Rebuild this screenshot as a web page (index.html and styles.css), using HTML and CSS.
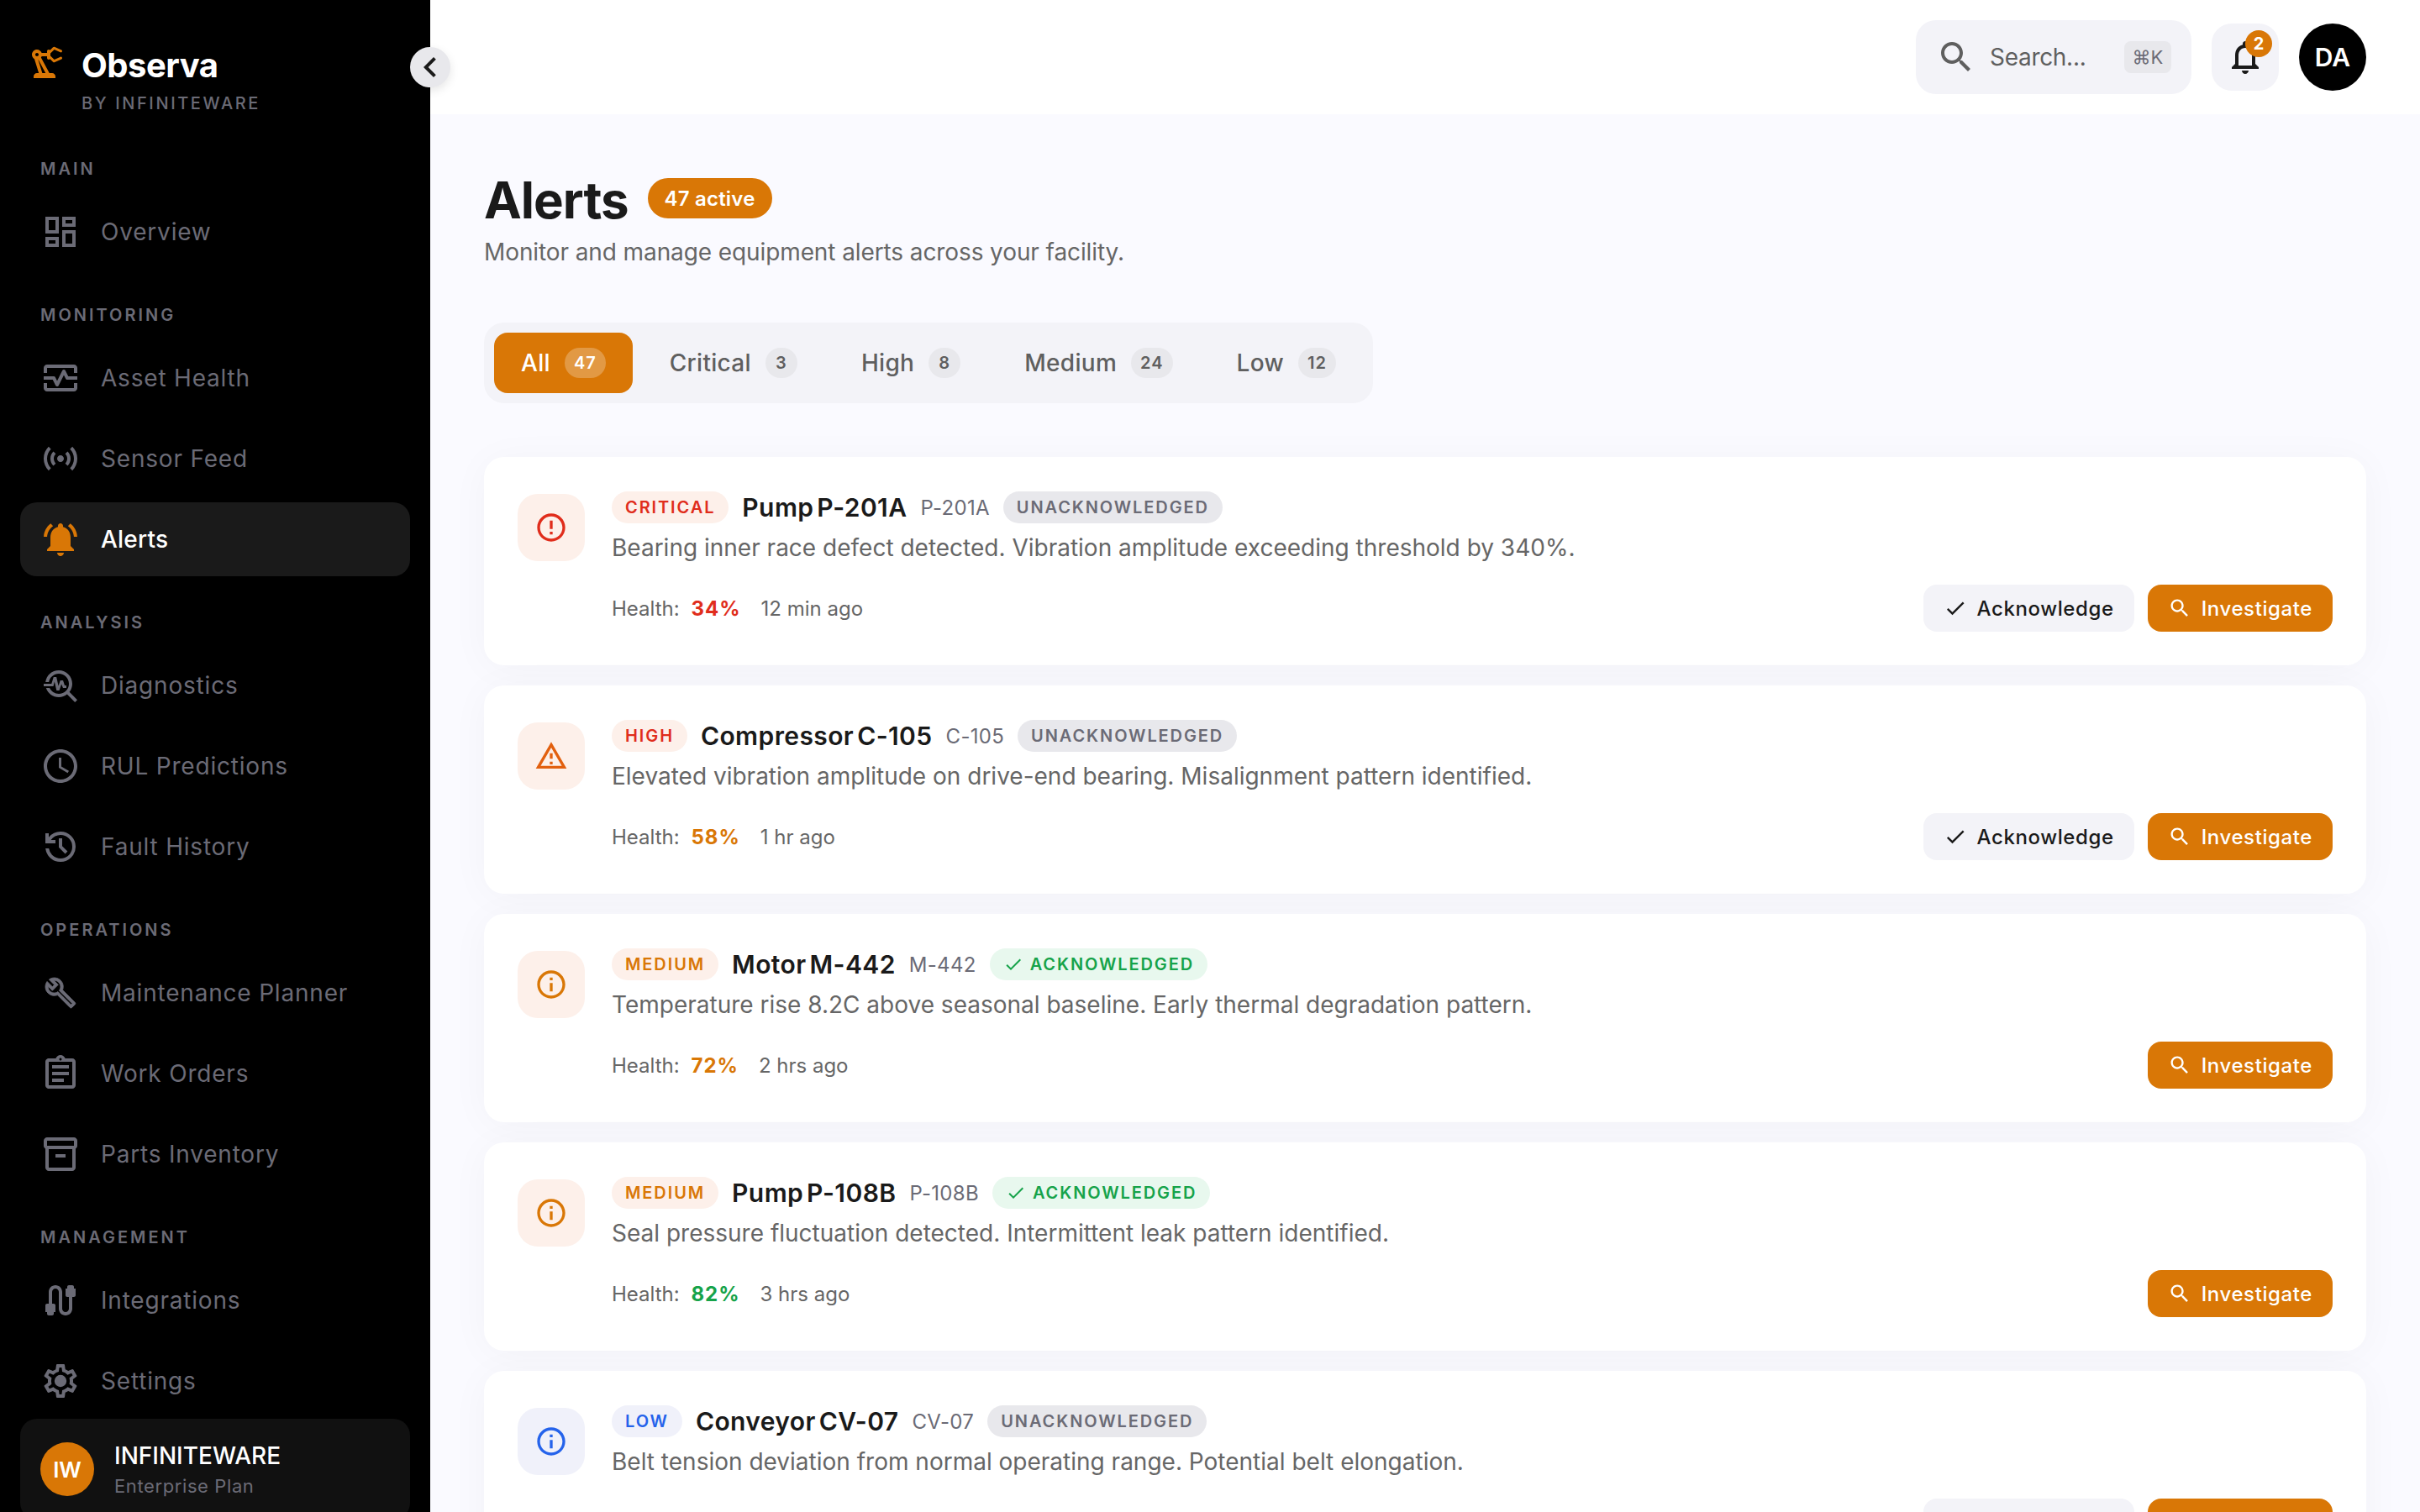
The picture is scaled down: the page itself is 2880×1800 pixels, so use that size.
FILE: index.html
```html
<!DOCTYPE html>
<html lang="en">
<head>
    <meta charset="UTF-8">
    <meta name="viewport" content="width=device-width, initial-scale=1.0">
    <title>Observa - Alerts</title>
    <link rel="stylesheet" href="styles.css">
</head>
<body>
    <div class="app">
        <aside class="sidebar">
            <div class="brand">
                <svg class="brand-icon" viewBox="0 0 24 24"><path d="M19.93 8.35l-3.6 1.68L14 7.7V6.3l2.33-2.33 3.6 1.68c.38.18.82.01 1-.36.18-.38.01-.82-.36-1l-3.92-1.83c-.38-.18-.83-.1-1.13.2L13.78 4.4c-.18-.24-.46-.4-.78-.4-.55 0-1 .45-1 1v1H8.82C8.4 4.84 7.3 4 6 4 4.34 4 3 5.34 3 7c0 1.1.6 2.05 1.48 2.57L7.08 18H6c-1.1 0-2 .9-2 2v1h13v-1c0-1.1-.9-2-2-2h-1.62L8.41 8.77c.17-.24.31-.49.41-.77H12v1c0 .55.45 1 1 1 .32 0 .6-.16.78-.4l1.74 1.74c.3.3.75.38 1.13.2l3.92-1.83c.38-.18.54-.62.36-1-.18-.37-.62-.54-1-.36zM6 8c-.55 0-1-.45-1-1s.45-1 1-1 1 .45 1 1-.45 1-1 1zm5.11 10H9.17l-2.46-8h.1l4.3 8z"/></svg>
                <div class="brand-text">
                    <div class="brand-name">Observa</div>
                    <div class="brand-sub">BY INFINITEWARE</div>
                </div>
            </div>
            <button class="collapse-btn">
                <svg viewBox="0 0 24 24"><path d="M15.41 7.41L14 6l-6 6 6 6 1.41-1.41L10.83 12z"/></svg>
            </button>

            <nav class="nav">
                <div class="nav-label">MAIN</div>
                <a class="nav-item">
                    <svg viewBox="0 0 24 24"><path d="M19 5v2h-4V5h4M9 5v6H5V5h4m10 8v6h-4v-6h4M9 17v2H5v-2h4M21 3h-8v6h8V3zM11 3H3v10h8V3zm10 8h-8v10h8V11zm-10 4H3v6h8v-6z"/></svg>
                    Overview
                </a>

                <div class="nav-label">MONITORING</div>
                <a class="nav-item">
                    <svg viewBox="0 0 24 24"><path d="M20 4H4c-1.1 0-2 .9-2 2v3h2V6h16v3h2V6c0-1.1-.9-2-2-2zm0 14H4v-3H2v3c0 1.1.9 2 2 2h16c1.1 0 2-.9 2-2v-3h-2v3z"/><path d="M14.89 7.55c-.34-.68-1.45-.68-1.79 0L10 13.76l-1.11-2.21A.988.988 0 0 0 8 11H2v2h5.38l1.72 3.45c.18.34.52.55.9.55s.72-.21.89-.55L14 10.24l1.11 2.21c.17.34.51.55.89.55h6v-2h-5.38l-1.73-3.45z"/></svg>
                    Asset Health
                </a>
                <a class="nav-item">
                    <svg viewBox="0 0 24 24"><path d="M7.76 16.24C6.67 15.16 6 13.66 6 12s.67-3.16 1.76-4.24l1.42 1.42C8.45 9.9 8 10.9 8 12c0 1.1.45 2.1 1.17 2.83l-1.41 1.41zm8.48 0C17.33 15.16 18 13.66 18 12s-.67-3.16-1.76-4.24l-1.42 1.42C15.55 9.9 16 10.9 16 12c0 1.1-.45 2.1-1.17 2.83l1.41 1.41zM12 10c-1.1 0-2 .9-2 2s.9 2 2 2 2-.9 2-2-.9-2-2-2zm8 2c0 2.21-.9 4.21-2.35 5.65l1.42 1.42C20.88 17.26 22 14.76 22 12s-1.12-5.26-2.93-7.07l-1.42 1.42C19.1 7.79 20 9.79 20 12zM6.35 6.35 4.93 4.93C3.12 6.74 2 9.24 2 12s1.12 5.26 2.93 7.07l1.42-1.42C4.9 16.21 4 14.21 4 12s.9-4.21 2.35-5.65z"/></svg>
                    Sensor Feed
                </a>
                <a class="nav-item active">
                    <svg viewBox="0 0 24 24"><path d="M7.58 4.08 6.15 2.65C3.75 4.48 2.17 7.3 2.03 10.5h2c.15-2.65 1.51-4.97 3.55-6.42zm12.39 6.42h2c-.15-3.2-1.73-6.02-4.12-7.85l-1.42 1.43c2.02 1.45 3.39 3.77 3.54 6.42zM18 11c0-3.07-1.64-5.64-4.5-6.32V4c0-.83-.67-1.5-1.5-1.5s-1.5.67-1.5 1.5v.68C7.63 5.36 6 7.92 6 11v5l-2 2v1h16v-1l-2-2v-5zm-6 11c.14 0 .27-.01.4-.04.65-.14 1.18-.58 1.44-1.18.1-.24.15-.5.15-.78h-4c.01 1.1.9 2 2.01 2z"/></svg>
                    Alerts
                </a>

                <div class="nav-label">ANALYSIS</div>
                <a class="nav-item">
                    <svg viewBox="0 0 24 24"><path d="M22 20.59l-4.69-4.69C18.37 14.55 19 12.85 19 11c0-4.42-3.58-8-8-8-4.08 0-7.44 3.05-7.93 7h2.02C5.57 7.17 8.03 5 11 5c3.31 0 6 2.69 6 6s-2.69 6-6 6c-2.42 0-4.5-1.44-5.45-3.5H3.4C4.45 16.69 7.46 19 11 19c1.85 0 3.55-.63 4.9-1.69L20.59 22 22 20.59z"/><path d="M8.43 9.69 9.65 15h1.64l1.26-3.78.95 2.28h2v-1.5h-1L13.51 9h-1.64l-1.09 3.29L9.58 7H7.89l-1.25 4H2v1.5h5.75z"/></svg>
                    Diagnostics
                </a>
                <a class="nav-item">
                    <svg viewBox="0 0 24 24"><path d="M11.99 2C6.47 2 2 6.48 2 12s4.47 10 9.99 10C17.52 22 22 17.52 22 12S17.52 2 11.99 2zM12 20c-4.42 0-8-3.58-8-8s3.58-8 8-8 8 3.58 8 8-3.58 8-8 8zm.5-13H11v6l5.25 3.15.75-1.23-4.5-2.67z"/></svg>
                    RUL Predictions
                </a>
                <a class="nav-item">
                    <svg viewBox="0 0 24 24"><path d="M12 21q-3.45 0-6.012-2.288T3.05 13H5.1q.35 2.6 2.313 4.3T12 19q2.925 0 4.963-2.037T19 12q0-2.925-2.037-4.963T12 5q-1.725 0-3.225.8T6.25 8H9v2H3V4h2v2.35q1.275-1.6 3.113-2.475T12 3q3.75 0 6.375 2.625T21 12q0 3.75-2.625 6.375T12 21Zm2.8-4.8L11 12.4V7h2v4.6l3.2 3.2-1.4 1.4Z"/></svg>
                    Fault History
                </a>

                <div class="nav-label">OPERATIONS</div>
                <a class="nav-item">
                    <svg class="thick" viewBox="-2.67 -2.67 29.33 29.33"><path d="M22.61 18.99l-9.08-9.08c.93-2.34.45-5.1-1.44-7C9.79.61 6.21.4 3.66 2.26L7.5 6.11 6.08 7.52 2.25 3.69C.39 6.23.6 9.82 2.9 12.11c1.86 1.86 4.57 2.35 6.89 1.48l9.11 9.11c.39.39 1.02.39 1.41 0l2.3-2.3c.4-.38.4-1.01 0-1.41zm-3 1.6l-9.46-9.46c-.61.45-1.29.72-2 .82-1.36.2-2.79-.21-3.83-1.25C3.37 9.76 2.93 8.5 3 7.26l3.09 3.09 4.24-4.24-3.09-3.09c1.24-.07 2.49.37 3.44 1.31 1.08 1.08 1.49 2.57 1.24 3.96-.12.71-.42 1.37-.88 1.96l9.45 9.45-.88.88z"/></svg>
                    Maintenance Planner
                </a>
                <a class="nav-item">
                    <svg viewBox="0 0 24 24"><path d="M19 3h-4.18C14.4 1.84 13.3 1 12 1s-2.4.84-2.82 2H5c-.14 0-.27.01-.4.04-.39.08-.74.28-1.01.55-.18.18-.33.4-.43.64-.1.23-.16.49-.16.77v14c0 .27.06.54.16.78s.25.45.43.64c.27.27.62.47 1.01.55.13.02.26.03.4.03h14c1.1 0 2-.9 2-2V5c0-1.1-.9-2-2-2zm-7-.25c.41 0 .75.34.75.75s-.34.75-.75.75-.75-.34-.75-.75.34-.75.75-.75zM19 19H5V5h14v14z"/><path d="M7 15h7v2H7zm0-4h10v2H7zm0-4h10v2H7z"/></svg>
                    Work Orders
                </a>
                <a class="nav-item">
                    <svg viewBox="0 0 24 24"><path d="M20 2H4c-1 0-2 .9-2 2v3.01c0 .72.43 1.34 1 1.69V20c0 1.1 1.1 2 2 2h14c.9 0 2-.9 2-2V8.7c.57-.35 1-.97 1-1.69V4c0-1.1-1-2-2-2zm-1 18H5V9h14v11zm1-13H4V4h16v3z"/><path d="M9 12h6v2H9z"/></svg>
                    Parts Inventory
                </a>

                <div class="nav-label">MANAGEMENT</div>
                <a class="nav-item">
                    <svg viewBox="0 0 24 24"><path d="M20 5V4c0-.55-.45-1-1-1h-2c-.55 0-1 .45-1 1v1h-1v4c0 .55.45 1 1 1h1v7c0 1.1-.9 2-2 2s-2-.9-2-2V7c0-2.21-1.79-4-4-4S5 4.79 5 7v7H4c-.55 0-1 .45-1 1v4h1v1c0 .55.45 1 1 1h2c.55 0 1-.45 1-1v-1h1v-4c0-.55-.45-1-1-1H7V7c0-1.1.9-2 2-2s2 .9 2 2v10c0 2.21 1.79 4 4 4s4-1.79 4-4v-7h1c.55 0 1-.45 1-1V5h-1z"/></svg>
                    Integrations
                </a>
                <a class="nav-item">
                    <svg viewBox="0 0 24 24"><path d="M19.43 12.98c.04-.32.07-.64.07-.98 0-.34-.03-.66-.07-.98l2.11-1.65c.19-.15.24-.42.12-.64l-2-3.46c-.09-.16-.26-.25-.44-.25-.06 0-.12.01-.17.03l-2.49 1c-.52-.4-1.08-.73-1.69-.98l-.38-2.65C14.46 2.18 14.25 2 14 2h-4c-.25 0-.46.18-.49.42l-.38 2.65c-.61.25-1.17.59-1.69.98l-2.49-1c-.06-.02-.12-.03-.18-.03-.17 0-.34.09-.43.25l-2 3.46c-.13.22-.07.49.12.64l2.11 1.65c-.04.32-.07.65-.07.98 0 .33.03.66.07.98l-2.11 1.65c-.19.15-.24.42-.12.64l2 3.46c.09.16.26.25.44.25.06 0 .12-.01.17-.03l2.49-1c.52.4 1.08.73 1.69.98l.38 2.65c.03.24.24.42.49.42h4c.25 0 .46-.18.49-.42l.38-2.65c.61-.25 1.17-.59 1.69-.98l2.49 1c.06.02.12.03.18.03.17 0 .34-.09.43-.25l2-3.46c.12-.22.07-.49-.12-.64l-2.11-1.65zm-1.98-1.71c.04.31.05.52.05.73 0 .21-.02.43-.05.73l-.14 1.13.89.7 1.08.84-.7 1.21-1.27-.51-1.04-.42-.9.68c-.43.32-.84.56-1.25.73l-1.06.43-.16 1.13-.2 1.35h-1.4l-.19-1.35-.16-1.13-1.06-.43c-.43-.18-.83-.41-1.23-.71l-.91-.7-1.06.43-1.27.51-.7-1.21 1.08-.84.89-.7-.14-1.13c-.03-.31-.05-.54-.05-.74s.02-.43.05-.73l.14-1.13-.89-.7-1.08-.84.7-1.21 1.27.51 1.04.42.9-.68c.43-.32.84-.56 1.25-.73l1.06-.43.16-1.13.2-1.35h1.39l.19 1.35.16 1.13 1.06.43c.43.18.83.41 1.23.71l.91.7 1.06-.43 1.27-.51.7 1.21-1.07.85-.89.7.14 1.13z"/><circle cx="12" cy="12" r="3.6"/></svg>
                    Settings
                </a>
            </nav>

            <div class="account">
                <div class="account-avatar">IW</div>
                <div>
                    <div class="account-name">INFINITEWARE</div>
                    <div class="account-plan">Enterprise Plan</div>
                </div>
            </div>
        </aside>

        <div class="main">
            <header class="topbar">
                <div class="search">
                    <svg viewBox="0 0 24 24"><path d="M15.5 14h-.79l-.28-.27C15.41 12.59 16 11.11 16 9.5 16 5.91 13.09 3 9.5 3S3 5.91 3 9.5 5.91 16 9.5 16c1.61 0 3.09-.59 4.23-1.57l.27.28v.79l5 4.99L20.49 19l-4.99-5zm-6 0C7.01 14 5 11.99 5 9.5S7.01 5 9.5 5 14 7.01 14 9.5 11.99 14 9.5 14z"/></svg>
                    <span class="search-text">Search...</span>
                    <span class="kbd">⌘K</span>
                </div>
                <button class="bell">
                    <svg viewBox="0 0 24 24"><path d="M12 22c1.1 0 2-.9 2-2h-4c0 1.1.9 2 2 2zm6-6v-5c0-3.07-1.63-5.64-4.5-6.32V4c0-.83-.67-1.5-1.5-1.5s-1.5.67-1.5 1.5v.68C7.64 5.36 6 7.92 6 11v5l-2 2v1h16v-1l-2-2zm-2 1H8v-6c0-2.48 1.51-4.5 4-4.5s4 2.02 4 4.5v6z"/></svg>
                    <span class="bell-badge">2</span>
                </button>
                <div class="user">DA</div>
            </header>

            <main class="content">
                <div class="title-row">
                    <h1>Alerts</h1>
                    <span class="active-count">47 active</span>
                </div>
                <p class="subtitle">Monitor and manage equipment alerts across your facility.</p>

                <div class="tabs">
                    <div class="tab active">All <span class="count">47</span></div>
                    <div class="tab">Critical <span class="count">3</span></div>
                    <div class="tab">High <span class="count">8</span></div>
                    <div class="tab">Medium <span class="count">24</span></div>
                    <div class="tab">Low <span class="count">12</span></div>
                </div>

                <div class="alerts">
                    <div class="alert">
                        <div class="alert-icon warm red">
                            <svg viewBox="0 0 24 24"><path d="M11 15h2v2h-2zm0-8h2v6h-2zm.99-5C6.47 2 2 6.48 2 12s4.47 10 9.99 10C17.52 22 22 17.52 22 12S17.52 2 11.99 2zM12 20c-4.42 0-8-3.58-8-8s3.58-8 8-8 8 3.58 8 8-3.58 8-8 8z"/></svg>
                        </div>
                        <div class="alert-body">
                            <div class="alert-head">
                                <span class="pill warm red">CRITICAL</span>
                                <span class="alert-name">Pump P-201A</span>
                                <span class="alert-id">P-201A</span>
                                <span class="pill grey">UNACKNOWLEDGED</span>
                            </div>
                            <p class="alert-desc">Bearing inner race defect detected. Vibration amplitude exceeding threshold by 340%.</p>
                            <div class="alert-foot">
                                <span class="meta">Health: <b class="red">34%</b></span>
                                <span class="meta">12 min ago</span>
                                <div class="actions">
                                    <button class="btn">
                                        <svg viewBox="0 0 24 24"><path d="M9 16.17L4.83 12l-1.42 1.41L9 19 21 7l-1.41-1.41z"/></svg>
                                        Acknowledge
                                    </button>
                                    <button class="btn primary">
                                        <svg viewBox="0 0 24 24"><path d="M15.5 14h-.79l-.28-.27C15.41 12.59 16 11.11 16 9.5 16 5.91 13.09 3 9.5 3S3 5.91 3 9.5 5.91 16 9.5 16c1.61 0 3.09-.59 4.23-1.57l.27.28v.79l5 4.99L20.49 19l-4.99-5zm-6 0C7.01 14 5 11.99 5 9.5S7.01 5 9.5 5 14 7.01 14 9.5 11.99 14 9.5 14z"/></svg>
                                        Investigate
                                    </button>
                                </div>
                            </div>
                        </div>
                    </div>

                    <div class="alert">
                        <div class="alert-icon warm deep">
                            <svg viewBox="0 0 24 24"><path d="M12 5.99L19.53 19H4.47L12 5.99M12 2L1 21h22L12 2zm1 14h-2v2h2v-2zm0-6h-2v4h2v-4z"/></svg>
                        </div>
                        <div class="alert-body">
                            <div class="alert-head">
                                <span class="pill warm red">HIGH</span>
                                <span class="alert-name">Compressor C-105</span>
                                <span class="alert-id">C-105</span>
                                <span class="pill grey">UNACKNOWLEDGED</span>
                            </div>
                            <p class="alert-desc">Elevated vibration amplitude on drive-end bearing. Misalignment pattern identified.</p>
                            <div class="alert-foot">
                                <span class="meta">Health: <b class="orange">58%</b></span>
                                <span class="meta">1 hr ago</span>
                                <div class="actions">
                                    <button class="btn">
                                        <svg viewBox="0 0 24 24"><path d="M9 16.17L4.83 12l-1.42 1.41L9 19 21 7l-1.41-1.41z"/></svg>
                                        Acknowledge
                                    </button>
                                    <button class="btn primary">
                                        <svg viewBox="0 0 24 24"><path d="M15.5 14h-.79l-.28-.27C15.41 12.59 16 11.11 16 9.5 16 5.91 13.09 3 9.5 3S3 5.91 3 9.5 5.91 16 9.5 16c1.61 0 3.09-.59 4.23-1.57l.27.28v.79l5 4.99L20.49 19l-4.99-5zm-6 0C7.01 14 5 11.99 5 9.5S7.01 5 9.5 5 14 7.01 14 9.5 11.99 14 9.5 14z"/></svg>
                                        Investigate
                                    </button>
                                </div>
                            </div>
                        </div>
                    </div>

                    <div class="alert">
                        <div class="alert-icon warm orange">
                            <svg viewBox="0 0 24 24"><path d="M11 7h2v2h-2zm0 4h2v6h-2zm1-9C6.48 2 2 6.48 2 12s4.48 10 10 10 10-4.48 10-10S17.52 2 12 2zm0 18c-4.41 0-8-3.59-8-8s3.59-8 8-8 8 3.59 8 8-3.59 8-8 8z"/></svg>
                        </div>
                        <div class="alert-body">
                            <div class="alert-head">
                                <span class="pill warm orange">MEDIUM</span>
                                <span class="alert-name">Motor M-442</span>
                                <span class="alert-id">M-442</span>
                                <span class="pill ok">
                                    <svg viewBox="0 0 24 24"><path d="M9 16.17L4.83 12l-1.42 1.41L9 19 21 7l-1.41-1.41z"/></svg>
                                    ACKNOWLEDGED
                                </span>
                            </div>
                            <p class="alert-desc">Temperature rise 8.2C above seasonal baseline. Early thermal degradation pattern.</p>
                            <div class="alert-foot">
                                <span class="meta">Health: <b class="orange">72%</b></span>
                                <span class="meta">2 hrs ago</span>
                                <div class="actions">
                                    <button class="btn primary">
                                        <svg viewBox="0 0 24 24"><path d="M15.5 14h-.79l-.28-.27C15.41 12.59 16 11.11 16 9.5 16 5.91 13.09 3 9.5 3S3 5.91 3 9.5 5.91 16 9.5 16c1.61 0 3.09-.59 4.23-1.57l.27.28v.79l5 4.99L20.49 19l-4.99-5zm-6 0C7.01 14 5 11.99 5 9.5S7.01 5 9.5 5 14 7.01 14 9.5 11.99 14 9.5 14z"/></svg>
                                        Investigate
                                    </button>
                                </div>
                            </div>
                        </div>
                    </div>

                    <div class="alert">
                        <div class="alert-icon warm orange">
                            <svg viewBox="0 0 24 24"><path d="M11 7h2v2h-2zm0 4h2v6h-2zm1-9C6.48 2 2 6.48 2 12s4.48 10 10 10 10-4.48 10-10S17.52 2 12 2zm0 18c-4.41 0-8-3.59-8-8s3.59-8 8-8 8 3.59 8 8-3.59 8-8 8z"/></svg>
                        </div>
                        <div class="alert-body">
                            <div class="alert-head">
                                <span class="pill warm orange">MEDIUM</span>
                                <span class="alert-name">Pump P-108B</span>
                                <span class="alert-id">P-108B</span>
                                <span class="pill ok">
                                    <svg viewBox="0 0 24 24"><path d="M9 16.17L4.83 12l-1.42 1.41L9 19 21 7l-1.41-1.41z"/></svg>
                                    ACKNOWLEDGED
                                </span>
                            </div>
                            <p class="alert-desc">Seal pressure fluctuation detected. Intermittent leak pattern identified.</p>
                            <div class="alert-foot">
                                <span class="meta">Health: <b class="green">82%</b></span>
                                <span class="meta">3 hrs ago</span>
                                <div class="actions">
                                    <button class="btn primary">
                                        <svg viewBox="0 0 24 24"><path d="M15.5 14h-.79l-.28-.27C15.41 12.59 16 11.11 16 9.5 16 5.91 13.09 3 9.5 3S3 5.91 3 9.5 5.91 16 9.5 16c1.61 0 3.09-.59 4.23-1.57l.27.28v.79l5 4.99L20.49 19l-4.99-5zm-6 0C7.01 14 5 11.99 5 9.5S7.01 5 9.5 5 14 7.01 14 9.5 11.99 14 9.5 14z"/></svg>
                                        Investigate
                                    </button>
                                </div>
                            </div>
                        </div>
                    </div>

                    <div class="alert">
                        <div class="alert-icon cool blue">
                            <svg viewBox="0 0 24 24"><path d="M11 7h2v2h-2zm0 4h2v6h-2zm1-9C6.48 2 2 6.48 2 12s4.48 10 10 10 10-4.48 10-10S17.52 2 12 2zm0 18c-4.41 0-8-3.59-8-8s3.59-8 8-8 8 3.59 8 8-3.59 8-8 8z"/></svg>
                        </div>
                        <div class="alert-body">
                            <div class="alert-head">
                                <span class="pill cool blue">LOW</span>
                                <span class="alert-name">Conveyor CV-07</span>
                                <span class="alert-id">CV-07</span>
                                <span class="pill grey">UNACKNOWLEDGED</span>
                            </div>
                            <p class="alert-desc">Belt tension deviation from normal operating range. Potential belt elongation.</p>
                            <div class="alert-foot">
                                <span class="meta">Health: <b class="green">88%</b></span>
                                <span class="meta">5 hrs ago</span>
                                <div class="actions">
                                    <button class="btn">
                                        <svg viewBox="0 0 24 24"><path d="M9 16.17L4.83 12l-1.42 1.41L9 19 21 7l-1.41-1.41z"/></svg>
                                        Acknowledge
                                    </button>
                                    <button class="btn primary">
                                        <svg viewBox="0 0 24 24"><path d="M15.5 14h-.79l-.28-.27C15.41 12.59 16 11.11 16 9.5 16 5.91 13.09 3 9.5 3S3 5.91 3 9.5 5.91 16 9.5 16c1.61 0 3.09-.59 4.23-1.57l.27.28v.79l5 4.99L20.49 19l-4.99-5zm-6 0C7.01 14 5 11.99 5 9.5S7.01 5 9.5 5 14 7.01 14 9.5 11.99 14 9.5 14z"/></svg>
                                        Investigate
                                    </button>
                                </div>
                            </div>
                        </div>
                    </div>
                </div>
            </main>
        </div>
    </div>
</body>
</html>
```

FILE: styles.css
```css
* {
    box-sizing: border-box;
}
html, body {
    margin: 0;
    height: 100%;
    overflow: hidden;
}
body {
    font-family: Inter, "Liberation Sans", sans-serif;
    color: #1a1a1a;
    background-color: #fafaff;
}
button {
    font-family: inherit;
    border: none;
    cursor: pointer;
}
svg {
    fill: currentColor;
    flex-shrink: 0;
}
.app {
    display: flex;
    height: 1800px;
    overflow: hidden;
}

/* sidebar */
.sidebar {
    position: relative;
    display: flex;
    flex-direction: column;
    width: 512px;
    flex-shrink: 0;
    height: 1800px;
    background-color: #000;
}
.brand {
    display: flex;
    align-items: flex-start;
    gap: 17px;
    flex-shrink: 0;
    height: 184px;
    padding: 51px 0 0 32px;
}
.brand-icon {
    width: 48px;
    height: 48px;
    color: #d97706;
}
.brand-name {
    margin-top: 2px;
    font-size: 40px;
    font-weight: 700;
    line-height: 50px;
    letter-spacing: -0.5px;
    color: #fff;
}
.brand-sub {
    margin-top: 8px;
    font-size: 20px;
    font-weight: 500;
    line-height: 24px;
    letter-spacing: 2.6px;
    color: #6b6b76;
}
.collapse-btn {
    position: absolute;
    top: 56px;
    left: 488px;
    display: flex;
    align-items: center;
    justify-content: center;
    width: 48px;
    height: 48px;
    padding: 0;
    border-radius: 50%;
    background-color: #e8e8ec;
    color: #1a1a1a;
    box-shadow: 0 4px 12px rgba(0, 0, 0, 0.1);
}
.collapse-btn svg {
    width: 48px;
    height: 48px;
}
.nav {
    display: flex;
    flex-direction: column;
    flex-shrink: 0;
    padding: 0 24px;
}
.nav-label {
    height: 32px;
    margin-bottom: 16px;
    padding-left: 24px;
    font-size: 20px;
    font-weight: 600;
    line-height: 34px;
    letter-spacing: 3px;
    color: #6b6b76;
}
.nav-item {
    display: flex;
    align-items: center;
    gap: 24px;
    height: 88px;
    margin-bottom: 8px;
    padding-left: 24px;
    border-radius: 20px;
    font-size: 28px;
    font-weight: 400;
    letter-spacing: 0.8px;
    color: #6b6b76;
}
.nav-item + .nav-label {
    margin-top: 30px;
}
.nav-item svg {
    width: 48px;
    height: 48px;
}
.nav-item .thick {
    stroke: currentColor;
    stroke-width: 0.5;
}
.nav-item.active {
    background-color: #1a1a1a;
    color: #fff;
    font-weight: 500;
    letter-spacing: 0.2px;
}
.nav-item.active svg {
    color: #d97706;
}
.account {
    display: flex;
    align-items: center;
    gap: 24px;
    flex-shrink: 0;
    height: 120px;
    margin: -7px 24px 0;
    padding-left: 24px;
    border-radius: 20px;
    background-color: #111;
}
.account-avatar {
    display: flex;
    align-items: center;
    justify-content: center;
    width: 64px;
    height: 64px;
    border-radius: 50%;
    background-color: #d97706;
    color: #fff;
    font-size: 26px;
    font-weight: 600;
}
.account-name {
    font-size: 28px;
    font-weight: 500;
    line-height: 40px;
    color: #fff;
}
.account-plan {
    font-size: 22px;
    line-height: 32px;
    letter-spacing: 0.6px;
    color: #6b6b76;
}

/* top bar */
.main {
    flex: 1;
    min-width: 0;
}
.topbar {
    display: flex;
    align-items: center;
    justify-content: flex-end;
    gap: 24px;
    height: 136px;
    padding-right: 64px;
    background-color: #fff;
}
.search {
    display: flex;
    align-items: center;
    gap: 16px;
    width: 328px;
    height: 88px;
    padding: 0 24px;
    border-radius: 24px;
    background-color: #f3f3f8;
    color: #5f5f5f;
}
.search svg {
    width: 48px;
    height: 48px;
}
.search-text {
    flex: 1;
    font-size: 28px;
    letter-spacing: -0.3px;
}
.kbd {
    display: flex;
    align-items: center;
    justify-content: center;
    width: 56px;
    height: 38px;
    border-radius: 8px;
    background-color: #e8e8ec;
    font-size: 22px;
    color: #6b6b76;
}
.bell {
    position: relative;
    display: flex;
    align-items: center;
    justify-content: center;
    width: 80px;
    height: 80px;
    padding: 0;
    border-radius: 24px;
    background-color: #f3f3f8;
    color: #1a1a1a;
}
.bell svg {
    width: 48px;
    height: 48px;
}
.bell-badge {
    position: absolute;
    top: 8px;
    right: 8px;
    width: 32px;
    height: 32px;
    border-radius: 50%;
    background-color: #d97706;
    color: #fff;
    font-size: 20px;
    font-weight: 700;
    line-height: 32px;
    text-align: center;
}
.user {
    display: flex;
    align-items: center;
    justify-content: center;
    width: 80px;
    height: 80px;
    border-radius: 50%;
    background-color: #000;
    color: #fff;
    font-size: 30px;
    font-weight: 600;
}

/* page */
.content {
    padding: 66px 64px 0;
}
.title-row {
    display: flex;
    align-items: center;
    gap: 23px;
    height: 72px;
}
h1 {
    margin: 0;
    font-size: 60px;
    font-weight: 700;
    letter-spacing: -1px;
    color: #1a1a1a;
}
.active-count {
    display: flex;
    align-items: center;
    height: 48px;
    margin-top: -4px;
    padding: 0 20px;
    border-radius: 24px;
    background-color: #d97706;
    color: #fff;
    font-size: 24px;
    font-weight: 600;
    letter-spacing: 0.2px;
}
.subtitle {
    margin: 4px 0 62px;
    font-size: 28px;
    line-height: 44px;
    letter-spacing: -0.1px;
    color: #666;
}
.tabs {
    display: inline-flex;
    gap: 12px;
    height: 96px;
    padding: 12px;
    border-radius: 24px;
    background-color: #f3f3f8;
    vertical-align: top;
}
.tab {
    display: flex;
    align-items: center;
    gap: 17px;
    padding: 0 32px;
    border-radius: 16px;
    font-size: 28px;
    font-weight: 500;
    letter-spacing: 0.3px;
    color: #5f5f5f;
}
.tab.active {
    background-color: #d97706;
    color: #fff;
}
.count {
    display: flex;
    align-items: center;
    justify-content: center;
    min-width: 38px;
    height: 36px;
    padding: 0 11px;
    border-radius: 18px;
    background-color: #e8e8ec;
    font-size: 20px;
    font-weight: 600;
    letter-spacing: 1px;
}
.tab.active .count {
    background-color: rgba(255, 255, 255, 0.25);
}
.alerts {
    display: flex;
    flex-direction: column;
    gap: 24px;
    margin-top: 64px;
}
.alert {
    display: flex;
    gap: 32px;
    flex-shrink: 0;
    height: 248px;
    padding: 40px;
    border-radius: 24px;
    background-color: #fff;
    box-shadow: 0 4px 48px rgba(0, 0, 0, 0.035);
}
.alert-icon {
    display: flex;
    align-items: center;
    justify-content: center;
    flex-shrink: 0;
    width: 80px;
    height: 80px;
    margin-top: 4px;
    border-radius: 24px;
}
.alert-icon svg {
    width: 40px;
    height: 40px;
}
.alert-body {
    flex: 1;
    min-width: 0;
}
.alert-head {
    display: flex;
    align-items: center;
    gap: 16px;
    height: 40px;
    margin-bottom: 6px;
}
.pill {
    display: flex;
    align-items: center;
    gap: 8px;
    height: 38px;
    padding: 0 16px;
    border-radius: 19px;
    font-size: 20px;
    font-weight: 600;
    letter-spacing: 1.9px;
}
.pill svg {
    width: 24px;
    height: 24px;
}
.warm { background-color: #fdf0ea; }
.cool { background-color: #f0f1fa; }
.red { color: #e02d1c; }
.deep { color: #e2600f; }
.orange { color: #d97706; }
.green { color: #16a34a; }
.blue { color: #2563eb; }
.grey {
    background-color: #e8e8ec;
    color: #6b6b76;
}
.ok {
    background-color: #e8f8ee;
    color: #16a34a;
}
.alert-name {
    font-size: 30px;
    font-weight: 600;
    letter-spacing: 0.4px;
    word-spacing: -4px;
    color: #1a1a1a;
}
.alert-id {
    font-size: 24px;
    letter-spacing: 0.3px;
    color: #6b6b76;
}
.alert-desc {
    margin: 0 0 22px;
    font-size: 28px;
    line-height: 44px;
    color: #666;
}
.alert-foot {
    display: flex;
    align-items: center;
    gap: 24px;
    height: 56px;
}
.meta {
    font-size: 24px;
    color: #666;
}
.meta b {
    margin-left: 7px;
    font-weight: 700;
    letter-spacing: 1px;
}
.actions {
    display: flex;
    gap: 16px;
    margin-left: auto;
}
.btn {
    display: flex;
    align-items: center;
    gap: 12px;
    height: 56px;
    padding: 0 24px;
    border-radius: 16px;
    background-color: #f3f3f8;
    color: #1a1a1a;
    font-size: 24px;
    font-weight: 500;
    letter-spacing: 0.6px;
}
.btn svg {
    width: 28px;
    height: 28px;
}
.btn.primary {
    background-color: #d97706;
    color: #fff;
}
```
